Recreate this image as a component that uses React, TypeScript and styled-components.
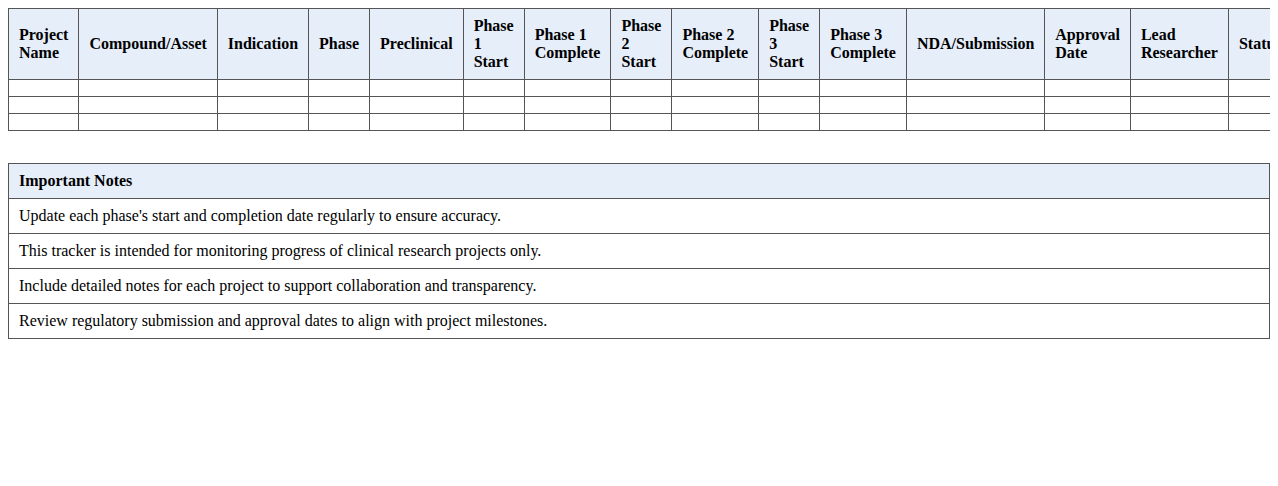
import styled, { createGlobalStyle } from "styled-components";

const GlobalStyle = createGlobalStyle`
  body {
    margin: 8px;
    font-family: "Liberation Serif", "Times New Roman", serif;
    font-size: 16px;
    color: #000;
    background: #fff;
  }
`

const Table = styled.table<{ $gap?: number }>`
  width: 100%;
  border-collapse: collapse;
  margin-bottom: ${(p) => p.$gap ?? 0}px;
`

const Th = styled.th`
  background: #e6eefa;
  border: 1px solid #555;
  padding: 8px 10px;
  text-align: left;
  font-weight: bold;
`

const Td = styled.td`
  border: 1px solid #555;
  padding: 8px 10px;
`

const columns = [
  "Project Name",
  "Compound/Asset",
  "Indication",
  "Phase",
  "Preclinical",
  "Phase 1 Start",
  "Phase 1 Complete",
  "Phase 2 Start",
  "Phase 2 Complete",
  "Phase 3 Start",
  "Phase 3 Complete",
  "NDA/Submission",
  "Approval Date",
  "Lead Researcher",
  "Status",
  "Notes",
];

const notes = [
  "Update each phase's start and completion date regularly to ensure accuracy.",
  "This tracker is intended for monitoring progress of clinical research projects only.",
  "Include detailed notes for each project to support collaboration and transparency.",
  "Review regulatory submission and approval dates to align with project milestones.",
];

function App() {
  return (
    <>
      <GlobalStyle />
      <Table $gap={32}>
        <thead>
          <tr>
            {columns.map((c) => (
              <Th key={c}>{c}</Th>
            ))}
          </tr>
        </thead>
        <tbody>
          {[0, 1, 2].map((r) => (
            <tr key={r}>
              {columns.map((c) => (
                <Td key={c} />
              ))}
            </tr>
          ))}
        </tbody>
      </Table>
      <Table>
        <thead>
          <tr>
            <Th>Important Notes</Th>
          </tr>
        </thead>
        <tbody>
          {notes.map((n) => (
            <tr key={n}>
              <Td>{n}</Td>
            </tr>
          ))}
        </tbody>
      </Table>
    </>
  );
}

export default App;
